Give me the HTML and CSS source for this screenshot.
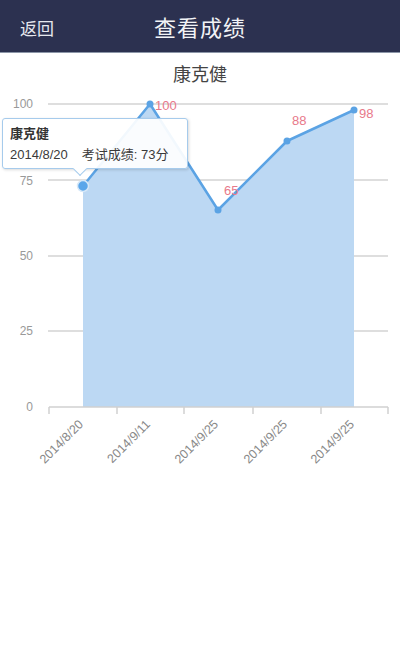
FILE: index.html
```html
<!DOCTYPE html>
<html>
<head>
  <meta charset="UTF-8">
  <title>查看成绩</title>
  <link rel="stylesheet" href="styles.css">
</head>
<body>
  <div class="topbar">
    <span class="back">返回</span>
    <h1 class="title">查看成绩</h1>
  </div>
  <h2 class="student">康克健</h2>

  <div class="chart">
    <svg class="plot" width="400" height="400" viewBox="0 88 400 400">
      <!-- grid -->
      <g class="grid">
        <line x1="48" y1="104" x2="388" y2="104"/>
        <line x1="48" y1="180" x2="388" y2="180"/>
        <line x1="48" y1="256" x2="388" y2="256"/>
        <line x1="48" y1="331" x2="388" y2="331"/>
      </g>
      <g class="ylabels">
        <text x="33" y="108">100</text>
        <text x="33" y="185">75</text>
        <text x="33" y="260">50</text>
        <text x="33" y="335">25</text>
        <text x="33" y="411">0</text>
      </g>

      <polygon class="area" points="83,186 150,104 218,210 287,141 354,110 354,407 83,407"/>
      <polyline class="line" points="83,186 150,104 218,210 287,141 354,110"/>

      <!-- x axis -->
      <g class="axis">
        <line x1="49" y1="407" x2="388" y2="407"/>
        <line x1="49" y1="407" x2="49" y2="414"/>
        <line x1="117" y1="407" x2="117" y2="414"/>
        <line x1="184" y1="407" x2="184" y2="414"/>
        <line x1="253" y1="407" x2="253" y2="414"/>
        <line x1="321" y1="407" x2="321" y2="414"/>
        <line x1="388" y1="407" x2="388" y2="414"/>
      </g>
      <g class="xlabels">
        <text transform="translate(84 425) rotate(-45)">2014/8/20</text>
        <text transform="translate(151 425) rotate(-45)">2014/9/11</text>
        <text transform="translate(219 425) rotate(-45)">2014/9/25</text>
        <text transform="translate(288 425) rotate(-45)">2014/9/25</text>
        <text transform="translate(355 425) rotate(-45)">2014/9/25</text>
      </g>

      <g class="dots">
        <circle cx="150" cy="104" r="3.5"/>
        <circle cx="218" cy="210" r="3.5"/>
        <circle cx="287" cy="141" r="3.5"/>
        <circle cx="354" cy="110" r="3.5"/>
        <circle class="active" cx="83" cy="186" r="5.5"/>
      </g>
      <g class="values">
        <text x="155" y="110">100</text>
        <text x="224" y="195">65</text>
        <text x="292" y="125">88</text>
        <text x="359" y="118">98</text>
      </g>
    </svg>

    <div class="tooltip">
      <div class="tip-name">康克健</div>
      <div class="tip-row"><span>2014/8/20</span><span class="tip-score">考试成绩: 73分</span></div>
    </div>
  </div>
</body>
</html>
```

FILE: styles.css
```css
body {
  margin: 0;
  background-color: #ffffff;
  font-family: "Liberation Sans", "Noto Sans CJK SC", sans-serif;
}

.topbar {
  position: relative;
  height: 52px;
  background-color: #2c3150;
  border-bottom: 1px solid #8c96a8;
  display: flex;
  align-items: center;
  justify-content: center;
}

.back {
  position: absolute;
  left: 20px;
  top: 15px;
  font-size: 17px;
  color: #e6e8ee;
}

.title {
  margin: 0;
  font-size: 22px;
  font-weight: normal;
  color: #f2f3f6;
  letter-spacing: 1px;
}

.student {
  margin: 7px 0 0;
  height: 28px;
  text-align: center;
  font-size: 18px;
  font-weight: normal;
  color: #444;
}

.chart {
  position: relative;
  height: 400px;
}

.plot {
  display: block;
}

.grid line {
  stroke: #dedede;
  stroke-width: 2;
}

.ylabels text {
  font-size: 12px;
  fill: #999;
  text-anchor: end;
}

.area {
  fill: #bcd8f3;
}

.line {
  fill: none;
  stroke: #5ba3e4;
  stroke-width: 2.5;
  stroke-linejoin: round;
}

.axis line {
  stroke: #d0d0d0;
  stroke-width: 1.5;
}

.xlabels text {
  font-size: 12.5px;
  fill: #888;
  text-anchor: end;
}

.dots circle {
  fill: #5ba3e4;
}

.dots .active {
  fill: #5aa6ea;
  stroke: #d6e8f8;
  stroke-width: 1.5;
}

.values text {
  font-size: 13px;
  fill: #e8798a;
}

.tooltip {
  position: absolute;
  left: 2px;
  top: 30px;
  width: 173px;
  height: 37px;
  padding: 6px 4px 6px 7px;
  background-color: rgba(255, 255, 255, 0.92);
  border: 1px solid #a6cbec;
  border-radius: 3px;
  box-shadow: 1px 1px 3px rgba(0, 0, 0, 0.15);
  font-size: 13px;
  line-height: 18px;
  color: #333;
}

.tooltip::after {
  content: "";
  position: absolute;
  left: 72px;
  bottom: -6px;
  width: 9px;
  height: 9px;
  background-color: #ffffff;
  border-right: 1px solid #a6cbec;
  border-bottom: 1px solid #a6cbec;
  transform: rotate(45deg);
}

.tip-name {
  font-weight: bold;
  margin-bottom: 3px;
}

.tip-row {
  color: #3a3a3a;
  white-space: nowrap;
}

.tip-score {
  margin-left: 14px;
}
```
